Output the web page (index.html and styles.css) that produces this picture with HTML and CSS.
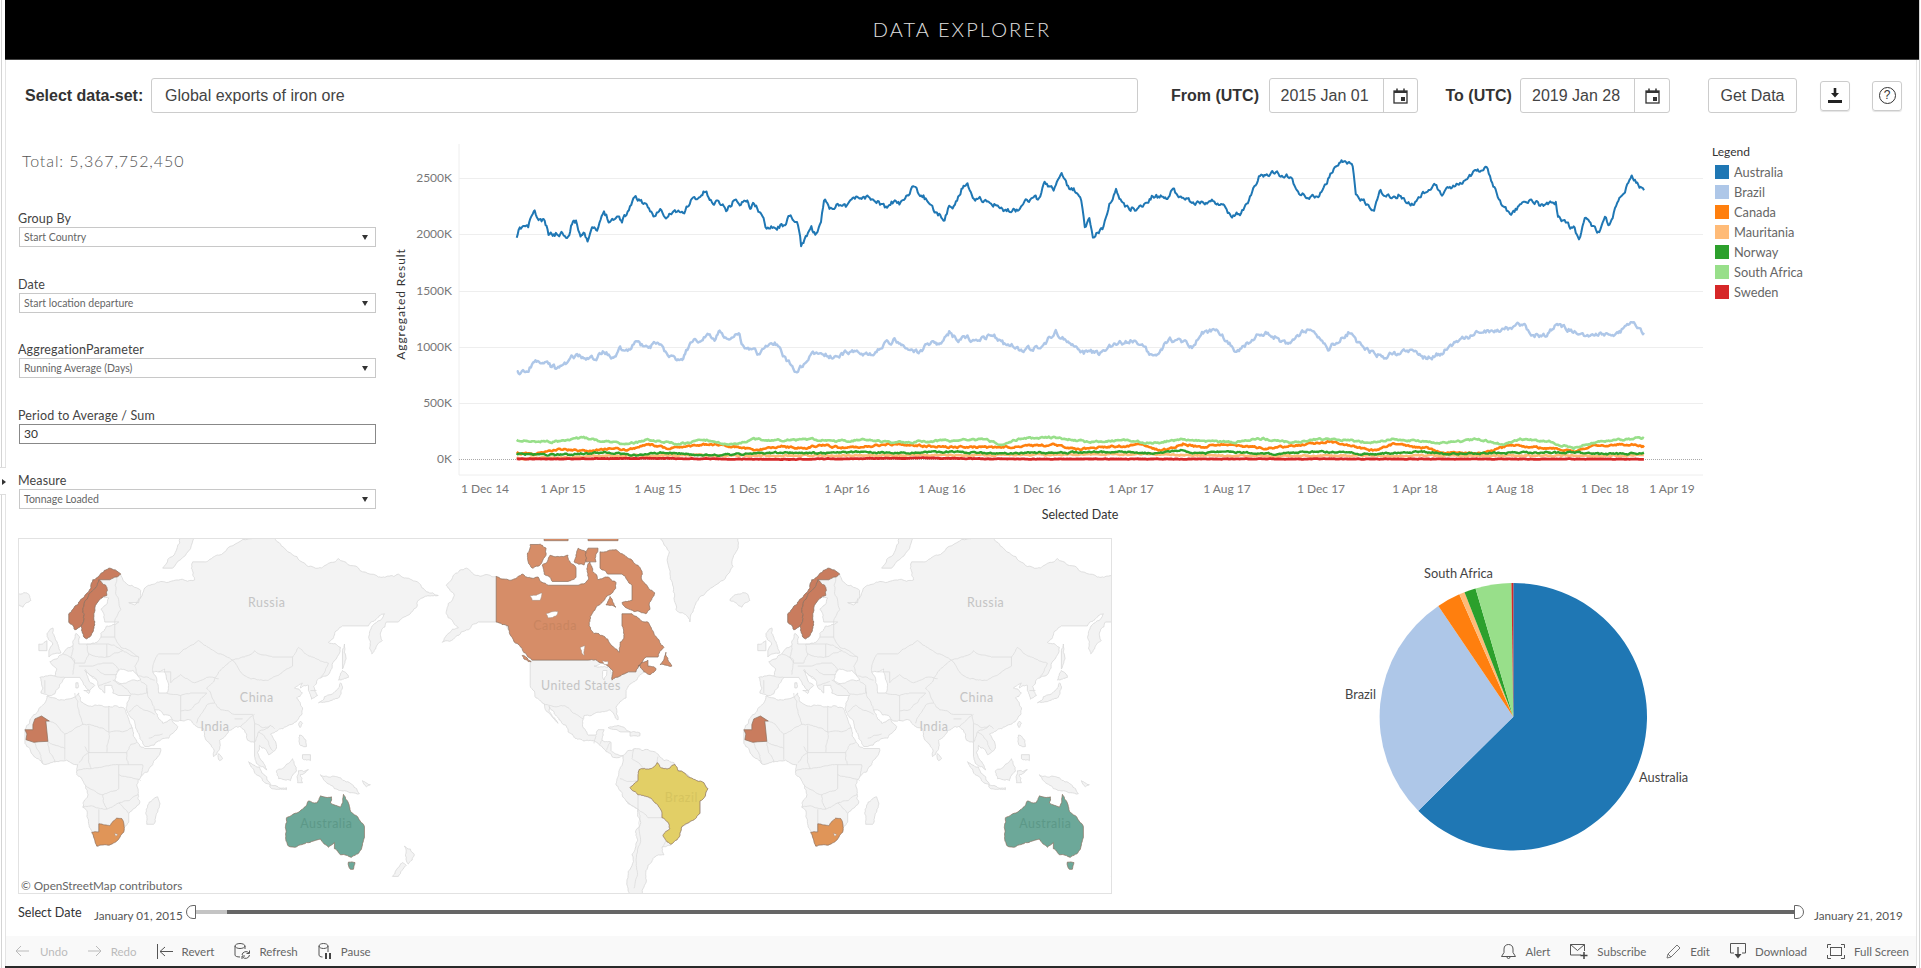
FILE: index.html
```html
<!DOCTYPE html>
<html lang="en">

<head>
    <meta charset="UTF-8">
    <title>Data Explorer</title>
    <link rel="stylesheet" href="styles.css">
</head>

<body>
    <div class="page">
        <div class="side-tab"><span class="side-arrow"></span></div>
        <div class="header">DATA EXPLORER</div>

        <div class="toolbar">
            <label class="ds-label">Select data-set:</label>
            <div class="field ds-input">Global exports of iron ore</div>
            <label class="date-label from-label">From (UTC)</label>
            <div class="field date-box from-box">
                <span class="date-text">2015 Jan 01</span>
                <span class="date-icon">
                    <svg width="15" height="16" viewBox="0 0 15 16"><rect x="1" y="3" width="13" height="12" fill="none" stroke="#333" stroke-width="1.3"/><rect x="1" y="3" width="13" height="2" fill="#333"/><path d="M4 0.5v3M11 0.5v3" stroke="#333" stroke-width="1.5"/><rect x="8" y="9" width="4" height="4" fill="#333"/></svg>
                </span>
            </div>
            <label class="date-label to-label">To (UTC)</label>
            <div class="field date-box">
                <span class="date-text">2019 Jan 28</span>
                <span class="date-icon">
                    <svg width="15" height="16" viewBox="0 0 15 16"><rect x="1" y="3" width="13" height="12" fill="none" stroke="#333" stroke-width="1.3"/><rect x="1" y="3" width="13" height="2" fill="#333"/><path d="M4 0.5v3M11 0.5v3" stroke="#333" stroke-width="1.5"/><rect x="8" y="9" width="4" height="4" fill="#333"/></svg>
                </span>
            </div>
            <div class="field get-data">Get Data</div>
            <div class="icon-btn download-btn">
                <svg width="14" height="15" viewBox="0 0 14 15"><path d="M5.7 0h2.6v5h2.7L7 9.5 3 5h2.7z" fill="#222"/><rect x="0" y="12" width="14" height="3" fill="#222"/></svg>
            </div>
            <div class="icon-btn help-btn"><span class="help-ring">?</span></div>
        </div>

        <div class="top-row">
            <div class="left-panel">
                <div class="total">Total: 5,367,752,450</div>
                <div class="filters">
                    <div class="filter">
                        <div class="filter-label">Group By</div>
                        <div class="select">Start Country</div>
                    </div>
                    <div class="filter">
                        <div class="filter-label">Date</div>
                        <div class="select">Start location departure</div>
                    </div>
                    <div class="filter">
                        <div class="filter-label">AggregationParameter</div>
                        <div class="select">Running Average (Days)</div>
                    </div>
                    <div class="filter">
                        <div class="filter-label">Period to Average / Sum</div>
                        <div class="text-input">30</div>
                    </div>
                    <div class="filter">
                        <div class="filter-label">Measure</div>
                        <div class="select">Tonnage Loaded</div>
                    </div>
                </div>
            </div>

            <!-- viewBox = page pixels, easier to line up with the screenshot -->
            <svg class="line-chart" id="lineChart" width="1320" height="418" viewBox="390 120 1320 418">
                <g class="grid">
                    <line x1="459" y1="144" x2="459" y2="475"/>
                    <line x1="459" y1="475" x2="1703" y2="475"/>
                    <line x1="459" y1="178.5" x2="1703" y2="178.5"/>
                    <line x1="459" y1="234.5" x2="1703" y2="234.5"/>
                    <line x1="459" y1="291.5" x2="1703" y2="291.5"/>
                    <line x1="459" y1="347.5" x2="1703" y2="347.5"/>
                    <line x1="459" y1="403.5" x2="1703" y2="403.5"/>
                    <line class="zero" x1="459" y1="459.5" x2="1703" y2="459.5"/>
                </g>
                <g class="y-labels">
                    <text x="452" y="182">2500K</text>
                    <text x="452" y="238">2000K</text>
                    <text x="452" y="295">1500K</text>
                    <text x="452" y="351">1000K</text>
                    <text x="452" y="407">500K</text>
                    <text x="452" y="463">0K</text>
                </g>
                <g class="x-labels">
                    <text x="485" y="493">1 Dec 14</text>
                    <text x="563" y="493">1 Apr 15</text>
                    <text x="658" y="493">1 Aug 15</text>
                    <text x="753" y="493">1 Dec 15</text>
                    <text x="847" y="493">1 Apr 16</text>
                    <text x="942" y="493">1 Aug 16</text>
                    <text x="1037" y="493">1 Dec 16</text>
                    <text x="1131" y="493">1 Apr 17</text>
                    <text x="1227" y="493">1 Aug 17</text>
                    <text x="1321" y="493">1 Dec 17</text>
                    <text x="1415" y="493">1 Apr 18</text>
                    <text x="1510" y="493">1 Aug 18</text>
                    <text x="1605" y="493">1 Dec 18</text>
                    <text x="1672" y="493">1 Apr 19</text>
                </g>
                <text class="axis-title" x="1080" y="519">Selected Date</text>
                <text class="axis-title axis-title-y" transform="translate(405 304) rotate(-90)">Aggregated Result</text>
                <g id="lines"></g>
            </svg>

            <div class="legend">
                <div class="legend-title">Legend</div>
                <div class="legend-row"><span class="swatch c-australia"></span>Australia</div>
                <div class="legend-row"><span class="swatch c-brazil"></span>Brazil</div>
                <div class="legend-row"><span class="swatch c-canada"></span>Canada</div>
                <div class="legend-row"><span class="swatch c-mauritania"></span>Mauritania</div>
                <div class="legend-row"><span class="swatch c-norway"></span>Norway</div>
                <div class="legend-row"><span class="swatch c-safrica"></span>South Africa</div>
                <div class="legend-row"><span class="swatch c-sweden"></span>Sweden</div>
            </div>
        </div>

        <div class="bottom-row">
            <svg class="map" width="1094" height="356" viewBox="0 0 1094 356">
                <defs>
                    <g id="world"></g>
                </defs>
                <use href="#world" x="0" y="0"/>
                <use href="#world" x="723" y="0"/>
                <g class="map-labels">
                    <text x="247" y="68">Russia</text>
                    <text x="970" y="68">Russia</text>
                    <text x="237" y="164">China</text>
                    <text x="961" y="164">China</text>
                    <text x="195" y="193">India</text>
                    <text x="918" y="193">India</text>
                    <text x="563" y="152">United States</text>
                    <text class="on-canada" x="537" y="92">Canada</text>
                    <text class="on-brazil" x="664" y="264">Brazil</text>
                    <text class="on-australia" x="307" y="291">Australia</text>
                    <text class="on-australia" x="1030" y="291">Australia</text>
                </g>
                <text class="map-credit" x="0" y="353">© OpenStreetMap contributors</text>
            </svg>

            <svg class="pie" width="805" height="356" viewBox="1112 538 805 356">
                <g id="pieSlices"></g>
                <text x="1424" y="578">South Africa</text>
                <text x="1345" y="699">Brazil</text>
                <text x="1639" y="782">Australia</text>
            </svg>
        </div>

        <div class="slider">
            <div class="slider-label">Select Date</div>
            <div class="slider-value value-start">January 01, 2015</div>
            <div class="track">
                <span class="track-off"></span>
                <span class="track-on"></span>
                <span class="thumb thumb-left"></span>
                <span class="thumb thumb-right"></span>
            </div>
            <div class="slider-value value-end">January 21, 2019</div>
        </div>

        <div class="footer">
            <div class="foot-group">
                <div class="foot-item off undo-item">
                    <svg width="14" height="12" viewBox="0 0 14 12"><path d="M14 6H1M6 1L1 6l5 5" fill="none" stroke="#bbb"/></svg>
                    <span>Undo</span>
                </div>
                <div class="foot-item off">
                    <svg width="14" height="12" viewBox="0 0 14 12"><path d="M0 6h13M8 1l5 5-5 5" fill="none" stroke="#bbb"/></svg>
                    <span>Redo</span>
                </div>
                <div class="foot-item">
                    <svg width="16" height="15" viewBox="0 0 16 15"><path d="M0.5 0v15M16 7.5H3M8 3L3 7.5 8 12" fill="none" stroke="#555"/></svg>
                    <span>Revert</span>
                </div>
                <div class="foot-item">
                    <svg width="16" height="16" viewBox="0 0 16 16"><path d="M1 3v9c0 1.2 2 2 5 2M1 3c0-1.4 2.4-2.5 5-2.5S11 1.600 11 3v3M1 3c0 1.400 2.400 2.500 5 2.500S11 4.400 11 3" fill="none" stroke="#555"/><path d="M8 12a4 4 0 0 1 7-2M15.500 12a4 4 0 0 1-7 2M15.500 7.500v3h-3M8 16v-3h3" fill="none" stroke="#555"/></svg>
                    <span>Refresh</span>
                </div>
                <div class="foot-item">
                    <svg width="14" height="16" viewBox="0 0 14 16"><path d="M1 3v9c0 1.200 1.500 2 3.500 2M1 3c0-1.400 2-2.500 4.500-2.500S10 1.600 10 3v6M1 3c0 1.400 2 2.500 4.500 2.500S10 4.400 10 3" fill="none" stroke="#555"/><path d="M8 10v6M12 10v6" stroke="#444" stroke-width="2"/></svg>
                    <span>Pause</span>
                </div>
            </div>
            <div class="foot-group">
                <div class="foot-item">
                    <svg width="15" height="16" viewBox="0 0 15 16"><path d="M0.500 13.500h14l-2.500-4V6c0-3-2-4.500-4.500-4.500S3 3 3 6v3.500zM6 14a1.500 1.500 0 0 0 3 0" fill="none" stroke="#555"/></svg>
                    <span>Alert</span>
                </div>
                <div class="foot-item">
                    <svg width="18" height="15" viewBox="0 0 18 15"><path d="M11 11H0.500V0.500h14V7M0.500 0.500L7.500 6.500l7-6" fill="none" stroke="#555"/><path d="M14 8v7M10.500 11.500h7" stroke="#444" stroke-width="1.500"/></svg>
                    <span>Subscribe</span>
                </div>
                <div class="foot-item">
                    <svg width="15" height="15" viewBox="0 0 15 15"><path d="M1 14l1-4L11 1l3 3-9 9zM2 10l3 3" fill="none" stroke="#777"/></svg>
                    <span>Edit</span>
                </div>
                <div class="foot-item">
                    <svg width="16" height="16" viewBox="0 0 16 16"><path d="M4 10H0.500V0.500h15V10H12" fill="none" stroke="#555"/><path d="M8 4v9" stroke="#444" stroke-width="1.300"/><path d="M4.500 11L8 15.500 11.500 11z" fill="#444"/></svg>
                    <span>Download</span>
                </div>
                <div class="foot-item">
                    <svg width="18" height="15" viewBox="0 0 18 15"><path d="M0.500 4V0.500H4M14 0.500h3.500V4M17.500 11v3.500H14M4 14.500H0.500V11" fill="none" stroke="#555"/><rect x="3.500" y="3.500" width="11" height="8" fill="none" stroke="#555"/></svg>
                    <span>Full Screen</span>
                </div>
            </div>
        </div>
    </div>

    <script src="chart.js"></script>
</body>

</html>
```

FILE: styles.css
```css
* {
    box-sizing: border-box;
}

html,
body {
    margin: 0;
    padding: 0;
    background: #fff;
    overflow: hidden;
}

body {
    width: 1921px;
    height: 968px;
    padding-left: 1px;
    font-family: "Lato", "Liberation Sans", sans-serif;
    color: #555;
}

.page {
    position: relative;
    width: 1919px;
    height: 968px;
    padding-left: 3px;
    border-left: 1px solid #d4d4d4;
    border-right: 1px solid #d4d4d4;
}

/* the thin frame lines left and right of the dashboard */
.page::before,
.page::after {
    content: '';
    position: absolute;
    top: 60px;
    bottom: 2px;
    width: 1px;
    background: #e4e4e4;
}

.page::before {
    left: 3px;
}

.page::after {
    right: 2px;
}

.side-tab {
    position: absolute;
    z-index: 1;
    left: -2px;
    top: 467px;
    width: 6px;
    height: 28px;
    background: #fff;
    border-top: 1px solid #ddd;
    border-bottom: 1px solid #ddd;
}

.side-arrow {
    position: absolute;
    left: 2px;
    top: 11px;
    border-left: 4px solid #333;
    border-top: 3px solid transparent;
    border-bottom: 3px solid transparent;
}

.header {
    height: 60px;
    background: #000;
    border-bottom: 1px solid #444;
    color: #e0e0e0;
    font-size: 20px;
    font-weight: 300;
    letter-spacing: 2.1px;
    line-height: 58px;
    text-align: center;
}

/* top controls */
.toolbar {
    display: flex;
    align-items: center;
    height: 35px;
    margin-top: 18px;
    padding-left: 20px;
    font-family: "Liberation Sans", Arial, sans-serif;
}

.ds-label,
.date-label {
    font-size: 16px;
    font-weight: 700;
    color: #333;
    white-space: nowrap;
}

.ds-label {
    width: 126px;
}

.field {
    height: 35px;
    border: 1px solid #ccc;
    border-radius: 3px;
    background: #fff;
    color: #444;
    font-size: 16px;
    line-height: 33px;
}

.ds-input {
    width: 987px;
    padding-left: 13px;
}

.from-label {
    width: 97.5px;
    margin-left: 33px;
}

.to-label {
    width: 74.5px;
    margin-left: 28px;
}

.date-box {
    display: flex;
    width: 150px;
}

.from-box {
    width: 149px;
}

.date-text {
    width: 113px;
    padding-left: 11px;
    white-space: nowrap;
}

.date-icon {
    display: flex;
    flex: 1;
    align-items: center;
    justify-content: center;
    border-left: 1px solid #ccc;
}

.get-data {
    width: 89px;
    margin-left: 38px;
    text-align: center;
}

.icon-btn {
    display: flex;
    align-items: center;
    justify-content: center;
    width: 30px;
    height: 30px;
    border: 1px solid #ccc;
    border-radius: 3px;
    box-shadow: 0 1px 1px #e4e4e4;
}

.download-btn {
    margin-left: 23px;
}

.help-btn {
    margin-left: 22px;
}

.help-ring {
    width: 17px;
    height: 17px;
    border: 1.5px solid #333;
    border-radius: 50%;
    color: #333;
    font-size: 12px;
    line-height: 14px;
    text-align: center;
}

/* filters + line chart */
.top-row {
    display: flex;
    height: 425px;
}

.left-panel {
    width: 385px;
    padding-left: 14px;
}

.total {
    margin: 38px 0 0 3px;
    font-size: 16px;
    font-weight: 300;
    letter-spacing: 0.9px;
    line-height: 20px;
    color: #555;
}

.filters {
    display: flex;
    flex-direction: column;
    gap: 29.5px;
    margin-top: 40px;
}

.filter-label {
    height: 16px;
    margin-left: -1px;
    font-size: 12.5px;
    letter-spacing: 0.15px;
    line-height: 15px;
    color: #444;
}

.select,
.text-input {
    position: relative;
    width: 357px;
    height: 20px;
    padding-left: 4px;
    border: 1px solid #c8c8c8;
    font-size: 10.5px;
    line-height: 19px;
    color: #666;
}

.select::after {
    content: '';
    position: absolute;
    top: 7px;
    right: 7px;
    border-top: 5px solid #333;
    border-left: 3px solid transparent;
    border-right: 3px solid transparent;
}

.text-input {
    border-color: #888;
    font-size: 12px;
    line-height: 18px;
    color: #333;
}

.line-chart {
    display: block;
    margin-top: 7px;
}

.grid line {
    stroke: #eeeeee;
    stroke-width: 1;
}

.grid .zero {
    stroke: #aaa;
    stroke-dasharray: 1 1;
}

.y-labels text,
.x-labels text {
    font-size: 12px;
    fill: #777;
}

.y-labels text {
    text-anchor: end;
}

.x-labels text {
    text-anchor: middle;
}

.axis-title {
    font-size: 12.5px;
    fill: #333;
    text-anchor: middle;
}

.axis-title-y {
    font-size: 12px;
    letter-spacing: 0.9px;
}

.legend {
    margin: 31px 0 0 2px;
    font-size: 12.8px;
    color: #666;
}

.legend-title {
    height: 15px;
    margin-bottom: 3px;
    font-size: 12px;
    color: #333;
    line-height: 15px;
}

.legend-row {
    display: flex;
    align-items: center;
    height: 20px;
    white-space: nowrap;
}

.swatch {
    width: 14px;
    height: 14px;
    margin: 0 5px 0 3px;
}

.c-australia { background: #1f77b4; }
.c-brazil { background: #aec7e8; }
.c-canada { background: #ff7f0e; }
.c-mauritania { background: #ffbb78; }
.c-norway { background: #2ca02c; }
.c-safrica { background: #98df8a; }
.c-sweden { background: #d62728; }

/* map + pie */
.bottom-row {
    display: flex;
    height: 356px;
    padding-left: 13px;
}

.map {
    display: block;
    flex: none;
    overflow: hidden;
    border: 1px solid #e2e2e2;
}

.map-labels text {
    font-size: 12.5px;
    letter-spacing: 0.5px;
    fill: #c4c4c4;
    text-anchor: middle;
}

.map-labels .on-canada {
    fill: #c98560;
}

.map-labels .on-brazil {
    fill: #d6c45e;
}

.map-labels .on-australia {
    fill: #5c9888;
}

.map-credit {
    font-size: 11.8px;
    fill: #666;
}

.pie {
    display: block;
    flex: none;
}

.pie text {
    font-size: 12.8px;
    fill: #444;
}

/* date slider */
.slider {
    display: flex;
    align-items: center;
    height: 36px;
    padding-left: 13px;
    font-size: 12px;
}

.slider-label {
    width: 76px;
    font-size: 12.6px;
    color: #333;
}

.slider-value {
    padding-top: 5px;
    font-size: 11.7px;
    color: #555;
    white-space: nowrap;
}

.value-start {
    width: 92px;
}

.value-end {
    margin-left: 10px;
}

.track {
    position: relative;
    display: flex;
    width: 1618px;
    height: 4px;
    padding: 0 10px;
}

.track-off {
    width: 31px;
    background: #c4c4c4;
}

.track-on {
    flex: 1;
    background: #666;
}

.thumb {
    position: absolute;
    top: -5px;
    width: 10px;
    height: 14px;
    background: #fff;
    border: 1px solid #666;
}

.thumb-left {
    left: 0;
    border-radius: 7px 0 0 7px;
}

.thumb-right {
    right: 0;
    border-radius: 0 7px 7px 0;
}

/* viz toolbar at the bottom */
.footer {
    display: flex;
    align-items: center;
    justify-content: space-between;
    height: 32px;
    margin-top: 6px;
    margin-right: 3px;
    padding: 0 7px 0 10px;
    background: #f9f9f9;
    border-bottom: 2px solid #2a2a2a;
    font-size: 11.5px;
}

.foot-group {
    display: flex;
    gap: 20px;
}

.foot-item {
    display: flex;
    align-items: center;
    gap: 9px;
    color: #666;
    white-space: nowrap;
}

.foot-item.off {
    color: #bbb;
}

.foot-item.undo-item {
    gap: 11px;
}
```

FILE: chart.js
```js
// ---- line chart ----
// points were read off two crops of the chart, so convert them to page pixels
function ptsA(a) {
    var out = [];
    for (var i = 0; i < a.length; i += 2) out.push([400 + a[i] / 2.613, 140 + a[i + 1] / 3]);
    return out;
}

function ptsB(a) {
    var out = [];
    for (var i = 0; i < a.length; i += 2) out.push([1000 + a[i] / 2.24, 140 + a[i + 1] / 3]);
    return out;
}

var series = [
    {
        color: '#1f77b4', width: 2, amp: 4.5, seed: 11,
        pts: ptsA([305,300,310,275,322,258,335,262,345,222,352,218,362,240,378,245,388,282,410,282,425,278,442,287,452,238,460,245,472,285,482,272,490,298,505,265,515,275,533,215,545,238,570,230,580,240,595,215,610,173,630,180,645,205,665,225,680,210,695,238,715,212,740,222,760,180,785,170,798,152,812,185,835,185,855,210,878,172,885,195,905,180,915,200,925,190,945,225,955,260,970,255,985,262,1000,255,1018,232,1040,255,1048,318,1060,290,1075,262,1085,285,1100,255,1108,180,1125,205,1150,190,1165,195,1180,175,1215,170,1245,182,1270,205,1290,185,1305,195,1320,170,1338,145,1365,170,1385,185,1400,220,1423,235,1435,200,1450,195,1470,140,1483,138,1497,170,1530,185,1550,190,1568,210])
            .concat(ptsB([20,212,40,210,55,175,85,178,100,130,120,145,138,102,155,150,165,148,182,180,190,265,200,228,208,288,232,262,245,190,260,155,280,200,310,208,340,170,375,172,385,148,410,172,440,188,480,185,505,195,510,225,540,222,555,190,580,112,610,98,650,112,665,155,690,175,715,170,750,80,775,60,790,85,797,165,820,190,838,215,850,155,880,175,895,162,920,198,945,165,970,130,990,158,1020,135,1060,97,1090,85,1115,170,1145,235,1165,190,1200,185,1215,200,1245,185,1250,235,1285,265,1297,298,1310,235,1340,280,1355,240,1365,255,1385,185,1415,108,1430,135,1445,155]))
    },
    {
        color: '#aec7e8', width: 2.4, amp: 4.5, seed: 23,
        pts: ptsA([305,700,310,708,330,695,345,675,360,662,385,675,408,685,430,668,460,645,480,650,510,658,530,638,555,648,575,628,595,635,620,603,640,620,675,610,700,640,735,660,745,640,765,595,785,598,800,585,825,600,835,578,860,590,885,575,895,615,915,625,940,642,965,615,985,612,1010,660,1040,698,1070,650,1100,628,1130,655,1175,635,1200,645,1240,645,1260,615,1295,598,1330,625,1355,635,1385,612,1420,605,1435,580,1465,605,1483,585,1500,605,1550,582,1568,600])
            .concat(ptsB([10,610,50,630,90,618,125,578,150,600,185,638,230,640,250,615,300,600,345,650,378,598,430,615,460,570,490,580,530,635,580,580,600,575,640,612,690,565,735,628,780,580,820,630,860,650,925,628,955,655,980,645,1020,610,1080,570,1130,570,1170,550,1195,585,1220,590,1245,550,1300,585,1380,585,1415,550,1445,585]))
    },
    {
        color: '#ff7f0e', width: 2.6, amp: 1.6, seed: 37,
        pts: ptsA([305,938,345,943,420,927,490,935,550,925,600,928,650,912,700,925,790,915,850,915,930,930,1000,920,1050,925,1105,915,1165,925,1290,912,1400,920,1568,922])
            .concat(ptsB([60,918,120,915,170,928,320,913,360,933,410,912,450,922,490,912,600,925,740,905,840,933,880,912,960,925,990,940,1080,940,1140,915,1290,932,1340,915,1420,913,1445,922]))
    },
    {
        color: '#ffbb78', width: 2.6, amp: 1.2, seed: 41,
        pts: ptsA([305,955,420,953,500,948,800,946,1000,947,1568,945])
            .concat(ptsB([300,943,600,948,900,947,1200,947,1445,947]))
    },
    {
        color: '#2ca02c', width: 2.4, amp: 1.4, seed: 53,
        pts: ptsA([305,942,420,945,540,937,620,947,680,937,800,945,900,942,1000,937,1100,940,1210,935,1300,940,1430,935,1568,940])
            .concat(ptsB([120,938,280,935,340,940,410,932,450,942,500,935,620,942,710,935,830,942,950,935,1000,942,1150,938,1290,937,1360,942,1445,940]))
    },
    {
        color: '#98df8a', width: 2.6, amp: 1.6, seed: 67,
        pts: ptsA([305,902,400,905,480,893,530,905,590,912,650,900,730,912,795,898,860,915,925,898,1000,902,1075,898,1140,905,1215,898,1280,908,1400,903,1530,898,1568,912])
            .concat(ptsB([50,895,120,892,200,907,280,900,340,910,410,898,520,907,590,896,650,908,735,895,830,908,880,898,1000,908,1070,897,1130,915,1165,897,1230,905,1285,925,1340,905,1445,893]))
    },
    {
        color: '#d62728', width: 2.8, amp: 0.5, seed: 79,
        pts: ptsA([305,957,640,955,1000,958,1380,954,1568,957]).concat(ptsB([700,957,1445,957]))
    }
];

function wobble(pts, amp, seed) {
    var d = '';
    var n = 0;
    for (var i = 0; i < pts.length - 1; i++) {
        var a = pts[i];
        var b = pts[i + 1];
        var steps = Math.max(1, Math.ceil((b[0] - a[0]) / 1.2));
        for (var s = 0; s < steps; s++) {
            var t = s / steps;
            seed = (seed * 16807) % 2147483647;
            n = n * 0.55 + (seed / 2147483647 - 0.5) * amp;
            d += (d ? 'L' : 'M') + (a[0] + (b[0] - a[0]) * t).toFixed(1) + ' ' + (a[1] + (b[1] - a[1]) * t + n).toFixed(1);
        }
    }
    return d;
}

var SVG_NS = 'http://www.w3.org/2000/svg';

function addPath(parent, d, attrs) {
    var el = document.createElementNS(SVG_NS, 'path');
    el.setAttribute('d', d);
    for (var k in attrs) el.setAttribute(k, attrs[k]);
    parent.appendChild(el);
}

var lineGroup = document.getElementById('lines');
series.forEach(function (s) {
    addPath(lineGroup, wobble(s.pts, s.amp, s.seed), {
        fill: 'none', stroke: s.color, 'stroke-width': s.width, 'stroke-linejoin': 'round'
    });
});

// ---- pie ----
var pieSlices = [
    [0, 225.3, '#1f77b4'],
    [225.3, 325.9, '#aec7e8'],
    [325.9, 336.2, '#ff7f0e'],
    [336.2, 338.6, '#ffbb78'],
    [338.6, 343.6, '#2ca02c'],
    [343.6, 359.2, '#98df8a'],
    [359.2, 360, '#d62728']
];
var pieGroup = document.getElementById('pieSlices');
pieSlices.forEach(function (p) {
    var cx = 1513.3, cy = 716.7, r = 133.7;
    var a0 = p[0] * Math.PI / 180;
    var a1 = p[1] * Math.PI / 180;
    var large = p[1] - p[0] > 180 ? 1 : 0;
    var d = 'M' + cx + ' ' + cy +
        'L' + (cx + r * Math.sin(a0)) + ' ' + (cy - r * Math.cos(a0)) +
        'A' + r + ' ' + r + ' 0 ' + large + ' 1 ' + (cx + r * Math.sin(a1)) + ' ' + (cy - r * Math.cos(a1)) + 'Z';
    addPath(pieGroup, d, { fill: p[2] });
});

// ---- map ----
// rough outlines in lon,lat, mercator with the scale measured from the screenshot
function project(lon, lat) {
    var merc = Math.log(Math.tan(Math.PI / 4 + lat * Math.PI / 360));
    return [38 + 2.0083 * lon, 235 - 115.07 * merc];
}

// midpoint displacement so the coasts don't look like straight cuts.
// same hash for a->b and b->a, so neighbours keep sharing the same edge
function rough(p, q, out, depth, k) {
    var dx = q[0] - p[0], dy = q[1] - p[1];
    var len = Math.sqrt(dx * dx + dy * dy);
    if (depth === 0 || len < 2) return;
    var h = Math.sin((p[0] + q[0]) * 12.9898 + (p[1] + q[1]) * 78.233) * 43758.5453;
    h = h - Math.floor(h) - 0.5;
    var flip = p[0] > q[0] ? -1 : 1;
    var m = [
        (p[0] + q[0]) / 2 - flip * dy / len * h * len * k,
        (p[1] + q[1]) / 2 + flip * dx / len * h * len * k
    ];
    rough(p, m, out, depth - 1, k);
    out.push(m);
    rough(m, q, out, depth - 1, k);
}

function toPath(c, shift, closed, k) {
    var pts = [];
    var n = c.length / 2;
    var last = closed ? n : n - 1;
    for (var i = 0; i < last; i++) {
        var j = (i + 1) % n;
        var lon0 = c[i * 2], lat0 = c[i * 2 + 1], lon1 = c[j * 2], lat1 = c[j * 2 + 1];
        var p = project(lon0 + shift, lat0);
        var q = project(lon1 + shift, lat1);
        pts.push(p);
        // the 49th parallel and the alaska line stay straight
        if (k > 0 && lon0 !== lon1 && lat0 !== lat1) rough(p, q, pts, 4, k);
    }
    if (!closed) pts.push(project(c[(n - 1) * 2] + shift, c[(n - 1) * 2 + 1]));
    var d = '';
    pts.forEach(function (pt, i) {
        d += (i ? 'L' : 'M') + pt[0].toFixed(1) + ' ' + pt[1].toFixed(1);
    });
    return d + (closed ? 'Z' : '');
}

// old world, no shift
var landEast = [
    [-9,37,-9.5,43,-2,43.5,-1,46,-4.5,48.5,2,51,7,53.5,8.5,57,10.5,56,10,54,14,54,19,54.5,21,57,24,59,30,60,23,60,21,63,25,65.5,22,65.7,17.5,62,18,60,16.5,57,14,55.5,12.5,56,11,59,8,58,5,60,5,62,13,66,17,69,25,71,31,70,41,67,40,64.5,35,64.5,38,64,45,68,54,68.5,68,69,67,72,73,72,80,73,100,76,113,74,130,71,140,72.5,160,69.5,170,70,180,68.5,190,66,180,65,177,62.5,170,60,164,60,162,55,156.7,51,155.5,57,163,62,155,59,142,59,135,54.5,141,53,135,44,130,42.5,127.5,39.5,129.5,36,126.5,34.5,125,38,125,40,121,39,122,40.8,118,39,122,37,119,35,122,31,120,26,114,22.5,110,21,106,19,109,13,105,9,100.5,13.5,99.5,10,103,4,104,1.3,100.5,3.5,98,8,98,15,94.5,16,94,19,91,22.5,87,21.5,80.5,16,80,11,77.5,8,73,19,72.5,21.5,69,22.5,66.5,25,57,25.5,56,27,50,30,48,30,50,26,52,24,56,26,59.5,22.5,55,17,45,13,43,13,39,21,35,28,34,31.5,36,36,30,36,27,37,26.5,40,23,40,23,37,19.5,41,13,45.5,18,40,15.5,38,10.5,43,3,43,0,39,-2,36.7,-5.5,36],
    [-6,35.8,-2,35,10,37,11,33.5,20,32,25,31.5,32,31,34,28,37,21,39,15.5,43,12,51,12,47,4,41,-2,39,-6,40.5,-15,35,-20,35,-24,33,-26,30,-31,25.5,-34,19,-34.5,17,-29,12,-17,13.5,-8,9,-1,9.5,4,4,6.3,-4,5,-8,4.5,-13,9,-17,14.5,-17,21,-13,27.5,-9.5,31],
    [49.5,-12,50.4,-16,47.5,-25,44,-25,43.5,-20,44.5,-16],
    [-5,50,1,51.3,0,53,-2,56,-3,58.5,-6,57,-3,54,-5,52],
    [-10,52,-6,52,-6,55,-10,54],
    [-24,65,-18,63.5,-14,65,-16,66.5,-22,66],
    [130,33,135,33.5,140,35,142,39,141,41,139,38,133,35.5],
    [140,42,145,43,142,45.5],
    [142,46,143.5,49,143,54,142,52],
    [95,5.5,104,-2,106,-6,102,-4],
    [109,1,117,7,119,1,116,-4,110,-3],
    [105.5,-6.5,114,-7.5,114,-8.5,106,-7.5],
    [120,1,125,1.5,121,-1,122,-5,119.5,-5],
    [131,-1,141,-2.5,147,-6,150.5,-10.5,143,-9,138,-8,133,-4],
    [120.5,18.5,122,18,124,13,121,13.5],
    [122,9,126,9,126,6,122,7],
    [80,9.5,82,7,80.5,6],
    [121,25,122,24,120.8,22,120,23.5],
    [173,-34.5,178,-38,175,-41.5,174,-39],
    [172,-41,174,-42,170,-46,167,-46],
    [52,71,57,71,68,76.5,60,76],
    [152,-4,156,-6,154,-7],
    [8.500,41,9.600,41,9.500,39,8.500,39],
    [12.500,38,15.500,38,15,36.800]
];

// americas + greenland, drawn to the right of siberia
var landWest = [
    [-141,69.6,-156,71,-166,68,-162,66,-166,62,-160,58.5,-168,54.5,-155,58,-150,60,-141,60,-135,59,-130,55,-135,58],
    [-123,49,-95,49,-88,48,-82.5,45,-83,42,-79,43.5,-75,45,-71,45,-69,47.3,-67,45,-70,43,-74,40.5,-76,37,-76,35,-81,31,-80,25.5,-82,28,-84,30,-90,29,-97,27.5,-97.5,22,-95,18.5,-91,18.5,-90,21,-87,21,-88,16,-83.5,15,-83.5,11,-80,9,-77.5,8.5,-80,7.5,-83,8,-86,10.5,-88,13,-94,16,-97,15.7,-105,20,-106,23,-112,29,-114.5,31.5,-110,24,-115,29,-117,32.5,-121,35,-124,40,-124,48],
    [-77.5,8.5,-75,11,-71.5,12,-68,11,-62,10.5,-57,6,-52,5,-50,1,-44,-2.5,-37,-5,-35,-8,-39,-14,-39,-20,-42,-23,-48,-26,-49,-29,-53.5,-34,-58,-35,-57,-38,-62,-39,-65,-42,-66,-46,-68,-55,-75,-50,-73,-38,-71,-30,-70,-18,-76,-14,-81,-6,-80,-2,-79,2,-77.5,7],
    [-73,78,-60,76,-54,70,-51,63,-44,60,-40,65,-25,70,-20,75,-20,82,-60,83],
    [-85,22,-80,23,-74,20,-78,20],
    [-74,20,-69,19.5,-69,18.2,-74,18]
];

var bordersEast = [
    [28,60,28,56,31,53,40,50,38,47,40,43.5,48,42],
    [47,45,50,51,60,51,70,55,80,51,87,49,98,52,107,50,117,50,120,53,127,50,135,48,131,43],
    [87,49,80,45,74,39,78,33,81,30,88,28,97,28,98,24,102,22,106,23,108,21.5],
    [87,49,91,45,96,42.500,105,42,112,45,117,47,117,50],
    [50,45,56,45,56,41,61,44,68,41,74,43,80,42.500],
    [44,39,45,35,48,30],
    [54,37,61,36,66,37,74,37],
    [61,36,61,25],
    [61,29.500,66,30,70,33,74,37],
    [69,24,71,28,74,32,78,33],
    [35,29,39,32,46,29,48,28],
    [52,19,45,17],
    [27,42,36,36.500,44,37,44,40,41,41.500],
    [-2,43.500,3,43],
    [-7,42,-7,37],
    [2,51,8,49,7,44],
    [7,53.500,6,50,8,48,13,48,15,51,14,54],
    [14,54,24,54,24,50,15,51],
    [10,47,17,47,22,48,27,48,30,46,29,45],
    [13,46,19,42],
    [19,46,23,44,29,44],
    [20,40,26,41.500],
    [24,50,32,52,40,50],
    [24,54,32,52],
    [28,56,21,56],
    [25,69.500,29,69.500,31,63,28,60],
    [-8.700,27.300,3,19,12,23.500,25,20,37,22],
    [25,31.500,25,20,24,10,15,10,13,13],
    [12,23.500,10,30,8,37],
    [3,19,3,12,-5.500,15.500,-2,5],
    [-12,15,-8,4.500],
    [3,12,3,6.500],
    [15,23,15,10],
    [10,5,15,10,16,2,9,1],
    [24,10,34,10,36,14,39,15],
    [34,10,35,4,42,4,41,-2],
    [30,4,35,4],
    [16,2,30,4,30,-8,22,-11,13,-6],
    [30,-1,41,-4],
    [12,-17,23,-18,30,-15,40,-11],
    [22,-11,24,-18],
    [20,-18,20,-28],
    [30,-15,35,-20],
    [98,24,98,15,100,20,106,23],
    [100,20,105,15,107,11],
    [91,22.500,94,25,98,28],
    [88,26,92,26],
    [126,38,129,38]
];

var bordersWest = [
    [-117,32.500,-111,31.300,-106.500,31.700,-103,29,-97.500,26],
    [-92,14.500,-91,18],
    [-88,16,-89,14],
    [-84,15,-86,11],
    [-72,12,-73,7,-67,2,-70,-4,-79,-3],
    [-60,8,-60.500,5],
    [-70,-11,-70,-18,-65,-22,-58,-22],
    [-70,-18,-69,-22,-71,-40,-72,-50],
    [-54,-27,-58,-35],
    [-76,-14,-70,-18]
];

// white water over the land
var waterEast = [
    [28,42,31,46,37,45.500,41,42,35,41.500,30,41],
    [47,45,53,46,54,37,50,37,49,41]
];

var waterWest = [
    [-92,47,-85,48.500,-85,46.600],
    [-87.500,45.500,-85.500,45.500,-87,42],
    [-84,46,-80,45,-82,43]
];

var highlights = [
    // canada
    { fill: '#d68d68', shift: 360, k: 0.3, polys: [
        [-141,69.6,-135,69,-128,70,-120,69.5,-115,68,-108,68,-100,68,-95,69,-94,72,-90,69,-85,69.5,-81,68.5,-87,65,-93,62,-94.5,59,-92,57,-85,55.3,-82,53,-79.5,51.5,-79,54.5,-77,56,-78,59,-78,62,-73,62,-70,61,-65,60,-62,57,-57,53,-60,50,-66,50,-70,47,-65,49,-65,47,-61,46,-64,44,-67,45,-69,47.3,-71,45,-75,45,-79,43.5,-83,42,-82.5,45,-88,48,-95,49,-123,49,-125,50,-130,54,-135,59,-141,60],
        [-61.500,66.500,-64,63,-66,62,-72,62.500,-78,64.500,-73,65,-73,68,-78,70,-85,70,-89,71,-89,73.500,-81,73.800,-76,72.800,-68,70.500,-67,68.500],
        [-117,70,-113,68.700,-105,68.700,-101,69.500,-101,71,-105,73,-110,72.800,-114,73,-118,71.500],
        [-125,72,-123,71,-118,72,-116,74,-120,74.500,-124,74.500],
        [-102,72,-97,71.500,-96,73.500,-100,74],
        [-96,72,-91,72,-90,74,-95,74],
        [-86,64,-81,63.500,-84,65.800],
        [-95,75,-80,75,-80,76,-95,77],
        [-117,75,-105,75,-105,76.500,-117,76.500],
        [-90,77,-75,78,-62,82,-85,83],
        [-59,47.500,-53,47,-56,51.500],
        [-128,50.500,-123.500,48.500,-125,48.500]
    ] },
    { fill: '#e2cf66', shift: 360, k: 0.28, polys: [
        [-51.6,4.2,-50,1,-44,-2.5,-37,-5,-35,-8,-39,-14,-39,-20,-42,-23,-48,-26,-49,-29,-53.5,-33.7,-57.5,-30,-54,-27,-54.5,-25,-58,-22,-58,-20,-60,-16,-65,-12,-70,-11,-74,-7.5,-70,-4,-70,-1,-69.5,1.5,-64,2,-60.5,5,-57,2,-54,2.3]
    ] },
    { fill: '#6ca899', shift: 0, k: 0.22, polys: [
        [114,-22,113.5,-26,115,-34.5,118,-35,124,-33,131,-31.5,135,-35,138,-33,138,-35.5,141,-38,146.5,-39,150,-37.5,153,-31,153,-26,149,-21,146,-19,145,-15,142.5,-10.8,141,-17,136,-15,136.5,-12,131,-11.5,129,-15,125,-14,122,-18,117,-20.5],
        [145,-40.8,148.3,-41,147.5,-43.5,146,-43.5]
    ] },
    { fill: '#c97c5e', shift: 0, k: 0.3, polys: [
        [5,60,5,62,13,66,17,69,25,71,31,70,29,69.5,25.5,69,20,69,15,66,12,63,12.5,60.5,11,59,8,58],
        [11,59,12.5,56,14,55.5,16.5,57,18,60,17.5,62,22,65.7,24,66,23.5,68,20,69,15,66,12,63,12.5,60.5]
    ] },
    { fill: '#c97c5e', shift: 0, k: 0, polys: [
        [-17,21,-13,21,-13,23.4,-12,26,-8.7,27.3,-4.8,25,-6.5,25,-5.5,15.5,-10,15.3,-12.5,15,-16.5,16.3,-16,19]
    ] },
    { fill: '#e09558', shift: 0, k: 0.15, polys: [
        [16.5,-28.6,20,-28.4,20,-24.8,23,-25.3,25.5,-25.7,29,-22.2,31.5,-22.4,32.8,-26.5,32.5,-28.5,30,-31.5,25.5,-34,19,-34.5,18,-32]
    ] }
];

// holes inside the coloured countries
var lakes = [
    [-124,66,-118,66.500,-119,65,-123,65],
    [-116,62,-110,62.500,-111,61.500,-115,61],
    [-99,53,-96.500,53.500,-97,50.500,-98,51],
    [-88,48.800,-85,48.600,-85,47.500,-87,47.500],
    [28,-29,29.500,-29.500,28.500,-30.300]
];

var world = document.getElementById('world');
var landStyle = { fill: '#f3f3f3', stroke: '#d8d8d8', 'stroke-width': 0.8, 'stroke-linejoin': 'round' };
var lineStyle = { fill: 'none', stroke: '#dcdcdc', 'stroke-width': 0.8 };
var waterStyle = { fill: '#fff', stroke: '#d8d8d8', 'stroke-width': 0.8 };

landEast.forEach(function (c) { addPath(world, toPath(c, 0, true, 0.3), landStyle); });
landWest.forEach(function (c) { addPath(world, toPath(c, 360, true, 0.3), landStyle); });
waterEast.forEach(function (c) { addPath(world, toPath(c, 0, true, 0.25), waterStyle); });
waterWest.forEach(function (c) { addPath(world, toPath(c, 360, true, 0.25), waterStyle); });
bordersEast.forEach(function (c) { addPath(world, toPath(c, 0, false, 0.2), lineStyle); });
bordersWest.forEach(function (c) { addPath(world, toPath(c, 360, false, 0.2), lineStyle); });
highlights.forEach(function (h) {
    h.polys.forEach(function (c) {
        addPath(world, toPath(c, h.shift, true, h.k), { fill: h.fill, stroke: '#8a6f5e', 'stroke-width': 0.7, 'stroke-linejoin': 'round' });
    });
});
lakes.forEach(function (c, i) {
    addPath(world, toPath(c, i < 4 ? 360 : 0, true, 0.2), { fill: '#fff', stroke: '#a08a7c', 'stroke-width': 0.5 });
});
```
